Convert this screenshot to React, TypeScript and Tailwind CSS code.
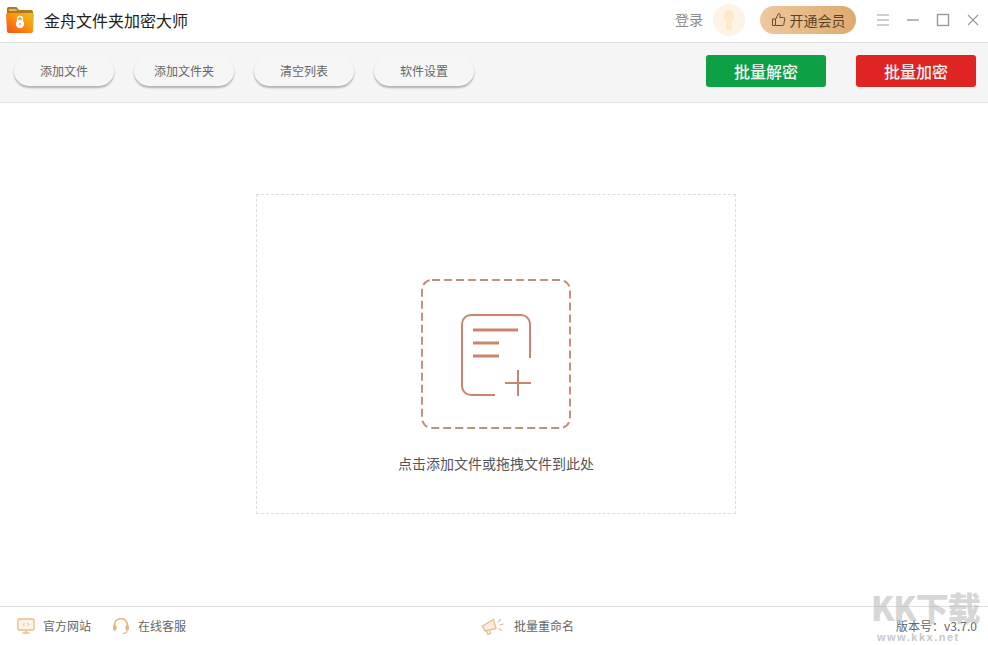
import React from "react";

const font = { fontFamily: '"Noto Sans CJK SC", "Liberation Sans", sans-serif' };

const tools = ["添加文件", "添加文件夹", "清空列表", "软件设置"];

function FolderLogo() {
  return (
    <svg width="30" height="28" viewBox="0 0 30 28">
      <defs>
        <linearGradient id="fold" x1="0" y1="1" x2="1" y2="0">
          <stop offset="0" stopColor="#f9500f" />
          <stop offset="0.6" stopColor="#fb9a12" />
          <stop offset="1" stopColor="#d8cc20" />
        </linearGradient>
      </defs>
      <path d="M2 2.500a1.500 1.500 0 0 1 1.500-1.500h8l2.500 3h12a2 2 0 0 1 2 2v5H2z" fill="#b37a1c" />
      <path d="M4 3h7l1.500 2H4z" fill="#e8b655" />
      <path d="M1 8.500a1.500 1.500 0 0 1 1.500-1.500h25a1.500 1.500 0 0 1 1.500 1.500L28 25a2 2 0 0 1-2 2H4a2 2 0 0 1-2-2z" fill="url(#fold)" />
      <path d="M12.500 15v-2a2.500 2.500 0 0 1 5 0v2" fill="none" stroke="#fff" strokeWidth="1.300" />
      <circle cx="15" cy="18" r="4.200" fill="#fff" />
      <circle cx="15" cy="18" r="1" fill="#f5a25c" />
    </svg>
  );
}

function WindowButtons() {
  return (
    <div className="flex items-center">
      <svg width="14" height="14" viewBox="0 0 14 14" className="mr-[16px]">
        <path d="M1 2h12M1 7h12M1 12h12" stroke="#a0a0a0" strokeWidth="1.200" />
      </svg>
      <svg width="14" height="14" viewBox="0 0 14 14" className="mr-[16px]">
        <path d="M1 7h12" stroke="#888" strokeWidth="1.200" />
      </svg>
      <svg width="14" height="14" viewBox="0 0 14 14" className="mr-[16px]">
        <rect x="1.500" y="1.500" width="11" height="11" fill="none" stroke="#999" strokeWidth="1.400" />
      </svg>
      <svg width="14" height="14" viewBox="0 0 14 14">
        <path d="M2 2l10 10M12 2L2 12" stroke="#999" strokeWidth="1.100" />
      </svg>
    </div>
  );
}

function AddFileIcon() {
  return (
    <svg width="150" height="150" viewBox="0 0 150 150" fill="none">
      <rect x="1" y="1" width="148" height="148" rx="10" stroke="#c4907c" strokeWidth="2" strokeDasharray="8 4" />
      <path d="M74 116H50a9 9 0 0 1-9-9V45a9 9 0 0 1 9-9h50a9 9 0 0 1 9 9v34" stroke="#c9856e" strokeWidth="2" />
      <path d="M52 51h45M52 64h26M52 77h26" stroke="#c9856e" strokeWidth="3" />
      <path d="M84 104h26M97 91v26" stroke="#c9856e" strokeWidth="2" />
    </svg>
  );
}

function MonitorIcon() {
  return (
    <svg width="18" height="18" viewBox="0 0 18 18" fill="none">
      <rect x="1" y="2" width="16" height="11" rx="1" fill="#fdf4e6" stroke="#e8bf8c" strokeWidth="1.400" />
      <path d="M5.500 16h7M9 13v3" stroke="#e8bf8c" strokeWidth="1.600" />
      <path d="M7.500 6L6 7.500 7.500 9M10.500 6L12 7.500 10.500 9" stroke="#dca66a" strokeWidth="0.800" />
    </svg>
  );
}

function HeadsetIcon() {
  return (
    <svg width="18" height="18" viewBox="0 0 18 18" fill="none">
      <path d="M2.500 9.500V8a6.500 6.500 0 0 1 13 0v1.500" stroke="#e8b57e" strokeWidth="1.600" />
      <rect x="1" y="8" width="3.500" height="5.500" rx="1.500" fill="#e8b57e" />
      <rect x="13.500" y="8" width="3.500" height="5.500" rx="1.500" fill="#e8b57e" />
      <path d="M15 13.500c0 2-2 3-4.500 3" stroke="#e8b57e" strokeWidth="1.200" />
    </svg>
  );
}

function MegaphoneIcon() {
  return (
    <svg width="24" height="20" viewBox="0 0 24 20" fill="none">
      <path d="M1.500 10l11-6.500 2.500 9-11 2.500z" fill="#fbeedd" stroke="#e5bd8e" strokeWidth="1.300" />
      <path d="M5.500 15l1.500 3.500 2.500-1-1-3" stroke="#e5bd8e" strokeWidth="1.300" />
      <path d="M17 6l3-3M18.500 9l4-1M17.500 12.500l3 2" stroke="#e5bd8e" strokeWidth="1.200" />
    </svg>
  );
}

export default function App() {
  return (
    <div className="relative flex h-[645px] w-[988px] flex-col overflow-hidden bg-white" style={font}>
      {/* title bar */}
      <div className="flex h-[43px] shrink-0 items-center border-b border-[#dcdcdc] pb-[3px] pl-[5px] pr-[8px]">
        <FolderLogo />
        <span className="ml-[9px] text-[16px] text-[#222]">金舟文件夹加密大师</span>
        <span className="ml-auto text-[14px] text-[#8a8a8a]">登录</span>
        <div className="ml-[10px] flex h-[32px] w-[32px] items-center justify-center rounded-full bg-[#fef4e5]">
          <div className="flex flex-col items-center">
            <div className="h-[12px] w-[10px] rounded-full bg-[#fdeacb]" />
            <div className="h-[8px] w-[6px] bg-[#fdeacb]" />
          </div>
        </div>
        <div className="ml-[15px] mr-[20px] flex h-[28px] w-[96px] items-center justify-center gap-[4px] rounded-full bg-gradient-to-r from-[#eec9a0] to-[#deaa6e] text-[14px] leading-none text-[#5c4326]">
          <svg width="15" height="15" viewBox="0 0 15 15" fill="none">
            <path d="M1.500 7h3v6.500h-3zM4.500 7.500L7.500 1.500c1.300 0 2 1 1.700 2.300L8.800 5.500h4a1 1 0 0 1 1 1.200l-1 5.800a1 1 0 0 1-1 1H4.500" stroke="#6b4d2b" strokeWidth="1" />
          </svg>
          开通会员
        </div>
        <WindowButtons />
      </div>

      {/* toolbar */}
      <div className="flex h-[60px] shrink-0 items-center gap-[20px] border-b border-[#e2e2e2] bg-[#f5f5f5] pb-[4px] pl-[14px] pr-[12px]">
        {tools.map((t) => (
          <button
            key={t}
            className="h-[30px] w-[100px] rounded-full bg-[#f6f6f6] text-[12px] text-[#666] shadow-[0_2px_2px_rgba(0,0,0,0.28)]"
          >
            {t}
          </button>
        ))}
        <button className="ml-auto h-[32px] w-[120px] rounded-[3px] bg-[#0ea044] text-[16px] font-medium text-[#f2f2f2]">
          批量解密
        </button>
        <button className="ml-[10px] h-[32px] w-[120px] rounded-[3px] bg-[#e02424] text-[16px] font-medium text-[#f2f2f2]">
          批量加密
        </button>
      </div>

      {/* drop zone */}
      <div className="flex flex-1 items-center justify-center pb-[1px] pl-[4px]">
        <div className="flex h-[320px] w-[480px] flex-col items-center border border-dashed border-[#dcdcdc] pt-[84px]">
          <AddFileIcon />
          <span className="mt-[23px] text-[14px] leading-[22px] text-[#555]">点击添加文件或拖拽文件到此处</span>
        </div>
      </div>

      {/* footer */}
      <div className="flex h-[39px] shrink-0 items-center border-t border-[#dedede] pl-[17px] pr-[11px] text-[12px] text-[#666]">
        <MonitorIcon />
        <span className="ml-[8px]">官方网站</span>
        <span className="ml-[21px]"><HeadsetIcon /></span>
        <span className="ml-[8px]">在线客服</span>
        <span className="ml-[295px]"><MegaphoneIcon /></span>
        <span className="ml-[9px]">批量重命名</span>
        <span className="ml-auto">版本号：v3.7.0</span>
      </div>

      {/* watermark */}
      <div className="pointer-events-none absolute left-[871px] top-[587px] flex w-[117px] flex-col items-start">
        <span className="text-[33px] font-black leading-[40px] tracking-[-1px] text-[#b0b0b0] opacity-50">KK下载</span>
        <span className="ml-[6px] mt-[4px] text-[11px] font-bold leading-[12px] tracking-[1.500px] text-[#c8c8c8]" style={{ fontFamily: '"Liberation Sans", sans-serif' }}>www.kkx.net</span>
      </div>
    </div>
  );
}
